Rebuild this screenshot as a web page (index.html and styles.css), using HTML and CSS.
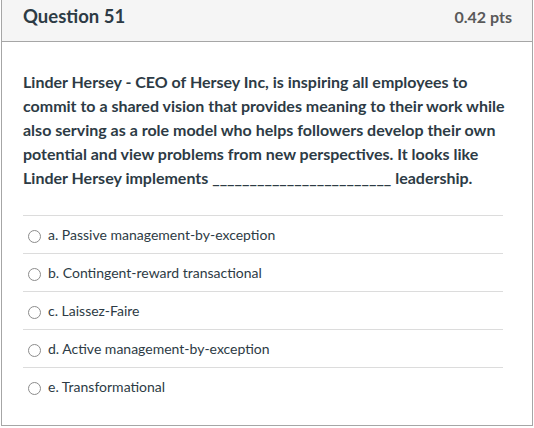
FILE: index.html
```html
<!DOCTYPE html>
<html>
<head>
<meta charset="utf-8">
<link rel="stylesheet" href="styles.css">
</head>
<body>
<div class="card">
  <div class="header">
    <span class="title">Question 51</span>
    <span class="pts">0.42 pts</span>
  </div>
  <div class="body">
    <p class="question">Linder Hersey - CEO of Hersey Inc, is inspiring all employees to commit to a shared vision that provides meaning to their work while also serving as a role model who helps followers develop their own potential and view problems from new perspectives. It looks like Linder Hersey implements ________________________ leadership.</p>
    <ul class="answers">
      <li class="answer"><span class="radio"></span><span class="label">a. Passive management-by-exception</span></li>
      <li class="answer"><span class="radio"></span><span class="label">b. Contingent-reward transactional</span></li>
      <li class="answer"><span class="radio"></span><span class="label">c. Laissez-Faire</span></li>
      <li class="answer"><span class="radio"></span><span class="label">d. Active management-by-exception</span></li>
      <li class="answer"><span class="radio"></span><span class="label">e. Transformational</span></li>
    </ul>
  </div>
</div>
</body>
</html>
```
FILE: styles.css
```css
html, body {
  margin: 0;
  padding: 0;
  background: #ffffff;
}
body {
  font-family: Lato, "Noto Sans", sans-serif;
  color: #2d3b45;
}
.card {
  margin: -1px 1px 0 1px;
  border: 1px solid #a6a6a6;
  box-sizing: border-box;
  width: 532px;
}
.header {
  height: 42px;
  box-sizing: border-box;
  background: #f5f5f5;
  border-bottom: 1px solid #a6a6a6;
  display: flex;
  align-items: baseline;
  justify-content: space-between;
  padding: 5px 20px 0 21px;
}
.title {
  font-size: 18.5px;
  font-weight: 700;
  color: #2d3b45;
}
.pts {
  font-size: 16px;
  font-weight: 700;
  color: #595959;
}
.body {
  padding: 28px 21px 20px 21px;
}
.question {
  margin: 0;
  font-size: 16px;
  line-height: 24px;
  font-weight: 700;
  width: 488px;
}
.answers {
  list-style: none;
  margin: 25px 0 0 0;
  padding: 0;
  width: 480px;
}
.answer {
  border-top: 1px solid #dcdcdc;
  height: 37px;
  display: flex;
  align-items: center;
  font-size: 14px;
}
.radio {
  width: 13px;
  height: 13px;
  box-sizing: border-box;
  border: 1px solid #8c8c8c;
  border-radius: 50%;
  margin: 3px 7px 0 5px;
  flex: none;
}
.label {
  line-height: 37px;
  color: #2d3b45;
}
```
